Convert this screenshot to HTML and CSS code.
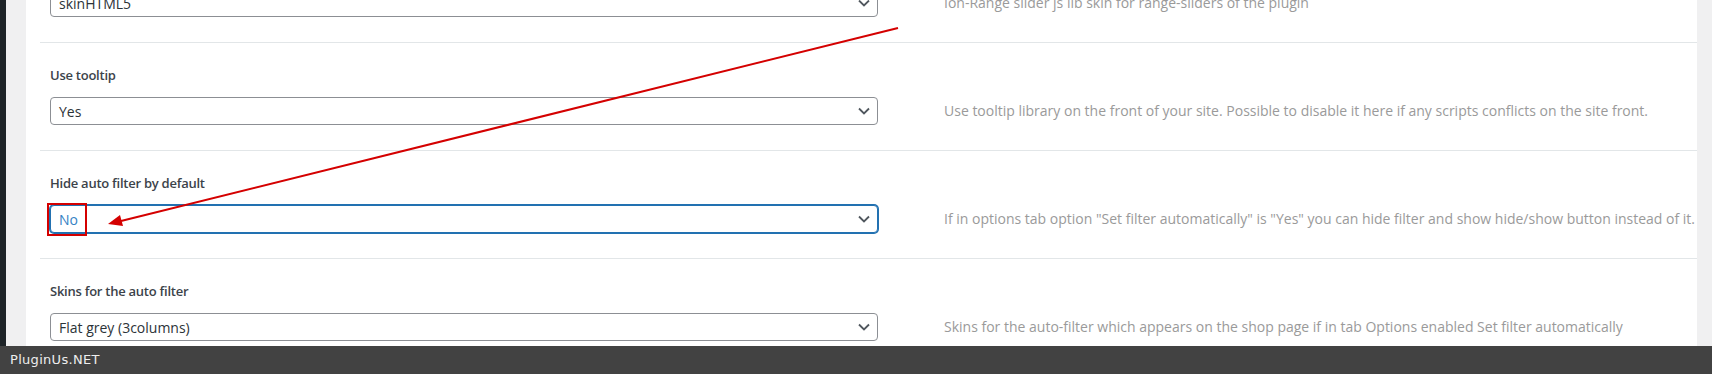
FILE: index.html
```html
<!DOCTYPE html>
<html lang="en">

<head>
    <meta charset="UTF-8">
    <meta name="viewport" content="width=device-width, initial-scale=1.0">
    <title>Filter options | PluginUs.NET</title>
    <link rel="stylesheet" href="styles.css">
</head>

<body>
    <div class="page">
        <div class="adminbar"></div>
        <div class="gutter"></div>
        <main class="panel">
            <div class="settings">
                <div class="row">
                    <div class="label">Range-slider skin</div>
                    <div class="field">
                        <div class="select">
                            <span>skinHTML5</span>
                            <svg class="chevron" viewBox="0 0 12 8"><path d="M1 1.5 6 6.5 11 1.5" /></svg>
                        </div>
                        <p class="desc">Ion-Range slider js lib skin for range-sliders of the plugin</p>
                    </div>
                </div>

                <div class="row">
                    <div class="label">Use tooltip</div>
                    <div class="field">
                        <div class="select">
                            <span>Yes</span>
                            <svg class="chevron" viewBox="0 0 12 8"><path d="M1 1.5 6 6.5 11 1.5" /></svg>
                        </div>
                        <p class="desc">Use tooltip library on the front of your site. Possible to disable it here if any scripts conflicts on the site front.</p>
                    </div>
                </div>

                <div class="row">
                    <div class="label">Hide auto filter by default</div>
                    <div class="field">
                        <div class="select focused">
                            <span>No</span>
                            <svg class="chevron" viewBox="0 0 12 8"><path d="M1 1.5 6 6.5 11 1.5" /></svg>
                            <div class="mark"></div>
                        </div>
                        <p class="desc">If in options tab option "Set filter automatically" is "Yes" you can hide filter and show hide/show button instead of it.</p>
                    </div>
                </div>

                <div class="row">
                    <div class="label">Skins for the auto filter</div>
                    <div class="field">
                        <div class="select">
                            <span>Flat grey (3columns)</span>
                            <svg class="chevron" viewBox="0 0 12 8"><path d="M1 1.5 6 6.5 11 1.5" /></svg>
                        </div>
                        <p class="desc">Skins for the auto-filter which appears on the shop page if in tab Options enabled Set filter automatically</p>
                    </div>
                </div>
            </div>
        </main>
        <div class="gutter right"></div>

        <!-- annotation arrow drawn over the screenshot -->
        <svg class="arrow" viewBox="0 0 1712 346">
            <line x1="898" y1="28" x2="121" y2="221" />
            <polygon points="108,224 123,226 120,215" />
        </svg>
    </div>
    <footer class="brand">PluginUs.NET</footer>
</body>

</html>
```

FILE: styles.css
```css
* {
    margin: 0;
    padding: 0;
    box-sizing: border-box;
}

body {
    width: 1712px;
    height: 374px;
    overflow: hidden;
    font-family: "Open Sans", "Noto Sans", sans-serif;
    font-size: 14px;
    background: #f0f0f1;
}

.page {
    position: relative;
    height: 346px;
    display: flex;
    overflow: hidden;
}

.adminbar {
    width: 6px;
    background: #1d2327;
}

.gutter {
    width: 20px;
    background: #f0f0f1;
}

.gutter.right {
    width: 15px;
}

.panel {
    flex: 1;
    background: #fff;
}

.settings {
    margin-top: -65px;
    margin-left: 14px;
}

.row {
    padding: 22px 0 25px 10px;
    border-bottom: 1px solid #e2e6e8;
}

.label {
    font-size: 13px;
    font-weight: 600;
    letter-spacing: -0.25px;
    line-height: 20px;
    color: #3c434a;
    margin-bottom: 12px;
}

.field {
    display: flex;
    align-items: center;
    gap: 66px;
}

.select {
    position: relative;
    width: 828px;
    height: 28px;
    flex-shrink: 0;
    display: flex;
    align-items: center;
    justify-content: space-between;
    padding: 0 7px 0 8px;
    border: 1px solid #8c8f94;
    border-radius: 4px;
    color: #2c3338;
    background: #fff;
}

.select.focused {
    border-color: #2271b1;
    box-shadow: 0 0 0 1px #2271b1;
    color: #3582c4;
}

.chevron {
    width: 12px;
    height: 8px;
    fill: none;
    stroke: #50575e;
    stroke-width: 1.8;
}

.mark {
    position: absolute;
    left: -4px;
    top: -3px;
    width: 40px;
    height: 33px;
    border: 2px solid #d40000;
}

.desc {
    color: #9a9a9a;
    line-height: 20px;
    white-space: nowrap;
}

.arrow {
    position: absolute;
    left: 0;
    top: 0;
    width: 1712px;
    height: 346px;
    pointer-events: none;
}

.arrow line {
    stroke: #d40000;
    stroke-width: 2;
}

.arrow polygon {
    fill: #d40000;
}

.brand {
    height: 28px;
    padding-left: 10px;
    background: #424242;
    color: #eee;
    font-family: "DejaVu Sans", sans-serif;
    font-size: 13px;
    letter-spacing: 0.3px;
    line-height: 28px;
}
```
